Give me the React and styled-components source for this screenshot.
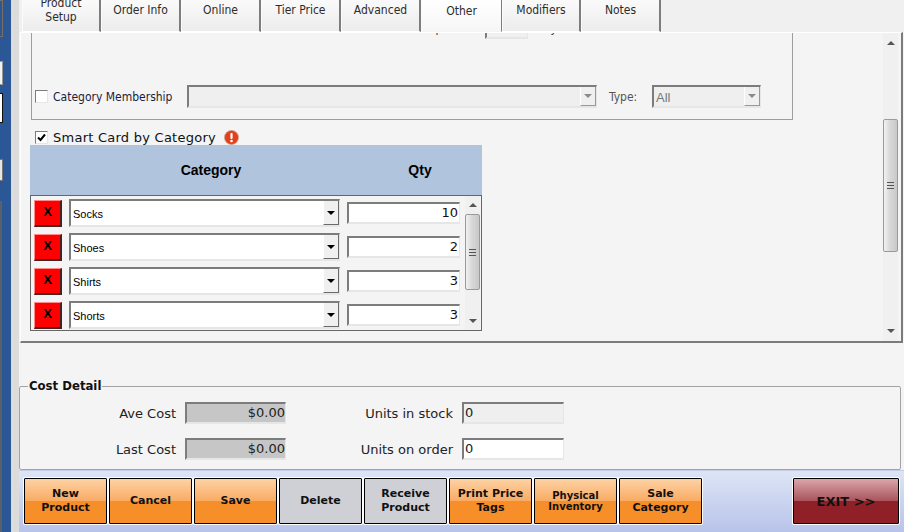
import React from 'react';
import styled, { createGlobalStyle, css } from 'styled-components';

const tabs = [
  { label: 'Product Setup', width: 79 },
  { label: 'Order Info', width: 80 },
  { label: 'Online', width: 80 },
  { label: 'Tier Price', width: 80 },
  { label: 'Advanced', width: 80 },
  { label: 'Other', width: 81, active: true },
  { label: 'Modifiers', width: 79 },
  { label: 'Notes', width: 80 },
];

const rows = [
  { name: 'Socks', qty: 10 },
  { name: 'Shoes', qty: 2 },
  { name: 'Shirts', qty: 3 },
  { name: 'Shorts', qty: 3 },
];

const actions = [
  { label: 'New\nProduct' },
  { label: 'Cancel' },
  { label: 'Save' },
  { label: 'Delete', tone: 'gray' },
  { label: 'Receive\nProduct', tone: 'gray' },
  { label: 'Print Price\nTags' },
  { label: 'Physical\nInventory', small: true },
  { label: 'Sale\nCategory' },
];

const App = () => (
  <Screen>
    <GlobalStyle />
    <Rail>
      <Stub $height={37} $fill="#2b5797" $line="#7a6f62" />
      <Stub $height={24} $top={24} $fill="#f2f2f2" $line="#999" />
      <Stub $height={30} $top={8} $fill="#fff" $line="#111" />
      <Stub $height={22} $top={36} $fill="#e6e6e6" $line="#777" />
      <RailStrip />
    </Rail>
    <Main>
      <TabBar>
        {tabs.map((tab) => (
          <Tab key={tab.label} $width={tab.width} $active={tab.active}>
            {tab.label}
          </Tab>
        ))}
      </TabBar>

      <Panel>
        <PanelContent>
          <OptionsBox>
            <ExpiryRow>
              <ExpiryLabel>Expires in</ExpiryLabel>
              <ExpiryInput />
              <ExpiryUnit>day(s)</ExpiryUnit>
            </ExpiryRow>
            <MembershipRow>
              <CheckBox />
              <OptionLabel>Category Membership</OptionLabel>
              <Combo $width={410} $disabled>
                <ComboValue />
                <DropButton $disabled>
                  <DropArrow $disabled />
                </DropButton>
              </Combo>
              <TypeLabel>Type:</TypeLabel>
              <Combo $width={109} $disabled>
                <ComboValue $disabled>All</ComboValue>
                <DropButton $disabled>
                  <DropArrow $disabled />
                </DropButton>
              </Combo>
            </MembershipRow>
          </OptionsBox>

          <SmartRow>
            <CheckBox>
              <svg width="11" height="11" viewBox="0 0 11 11">
                <path d="M2 5.5 L4.5 8 L9 2.5" fill="none" stroke="#000" strokeWidth="2" />
              </svg>
            </CheckBox>
            <SmartLabel>Smart Card by Category</SmartLabel>
            <svg width="15" height="15" viewBox="0 0 15 15">
              <circle cx="7.5" cy="7.5" r="7" fill="#e2401c" stroke="#c9a08c" strokeWidth="0.8" />
              <rect x="6.4" y="3" width="2.2" height="6" rx="1" fill="#fff" />
              <circle cx="7.5" cy="11" r="1.3" fill="#fff" />
            </svg>
          </SmartRow>

          <CategoryTable>
            <TableHead>
              <span>Category</span>
              <span>Qty</span>
            </TableHead>
            <TableBody>
              <RowList>
                {rows.map((row) => (
                  <Row key={row.name}>
                    <RemoveButton>X</RemoveButton>
                    <Combo>
                      <ComboValue>{row.name}</ComboValue>
                      <DropButton>
                        <DropArrow />
                      </DropButton>
                    </Combo>
                    <QtyInput>{row.qty}</QtyInput>
                  </Row>
                ))}
              </RowList>
              <ScrollBar $width={15} $inset={1}>
                <ScrollEnd $height={18}>
                  <ScrollArrow $up />
                </ScrollEnd>
                <Thumb $height={76}>
                  <Grip />
                </Thumb>
                <ScrollEnd $height={18} $bottom>
                  <ScrollArrow />
                </ScrollEnd>
              </ScrollBar>
            </TableBody>
          </CategoryTable>
        </PanelContent>

        <ScrollBar $width={15}>
          <ScrollEnd $height={20}>
            <ScrollArrow $up />
          </ScrollEnd>
          <ScrollGap $height={66} />
          <Thumb $height={133}>
            <Grip />
          </Thumb>
          <ScrollEnd $height={20} $bottom>
            <ScrollArrow />
          </ScrollEnd>
        </ScrollBar>
      </Panel>

      <CostBox>
        <CostLegend>Cost Detail</CostLegend>
        <CostGrid>
          <CostLabel>Ave Cost</CostLabel>
          <CostInput $tone="locked" $right>$0.00</CostInput>
          <CostLabel>Units in stock</CostLabel>
          <CostInput $tone="disabled">0</CostInput>
          <CostLabel>Last Cost</CostLabel>
          <CostInput $tone="locked" $right>$0.00</CostInput>
          <CostLabel>Units on order</CostLabel>
          <CostInput>0</CostInput>
        </CostGrid>
      </CostBox>

      <Footer>
        {actions.map((action) => (
          <ActionButton key={action.label} $tone={action.tone} $small={action.small}>
            {action.label}
          </ActionButton>
        ))}
        <ExitButton>{'EXIT >>'}</ExitButton>
      </Footer>
    </Main>
  </Screen>
);

export default App;

const GlobalStyle = createGlobalStyle`
  html, body {
    margin: 0;
    padding: 0;
    overflow: hidden;
  }
`;

const wideFont = `"DejaVu Sans", Verdana, sans-serif`;
const narrowFont = `"DejaVu Sans Condensed", "Noto Sans", Tahoma, sans-serif`;
const plainFont = `"Liberation Sans", Arial, sans-serif`;

const sunken = css`
  box-sizing: border-box;
  border-style: solid;
  border-width: 2px 1px 2px 2px;
  border-color: #7c7c7c #e6e6e6 #e6e6e6 #7c7c7c;
`;

const Screen = styled.div`
  display: flex;
  width: 904px;
  height: 532px;
  overflow: hidden;
  background: #f4f4f4;
`;

const Rail = styled.div`
  display: flex;
  flex-direction: column;
  box-sizing: border-box;
  flex: 0 0 19px;
  background: #2b5797;
  border-right: 8px solid #dcdcdc;
`;

const Stub = styled.div`
  box-sizing: border-box;
  flex: none;
  width: 3px;
  height: ${({ $height }) => $height}px;
  margin-top: ${({ $top }) => $top || 0}px;
  background: ${({ $fill }) => $fill};
  border: 1px solid ${({ $line }) => $line};
  border-left: 0;
`;

const RailStrip = styled.div`
  flex: 1;
  width: 2px;
  margin-top: 20px;
  background: #5a6068;
`;

const Main = styled.div`
  display: flex;
  flex-direction: column;
  flex: 1;
  min-width: 0;
`;

const TabBar = styled.div`
  display: flex;
  flex: 0 0 32px;
  box-sizing: border-box;
  padding-left: 3px;
  background: #f0f0f0;
`;

const Tab = styled.div`
  display: flex;
  align-items: center;
  justify-content: center;
  box-sizing: border-box;
  width: ${({ $width }) => $width}px;
  height: 32px;
  padding: 0 6px ${({ $active }) => ($active ? 10 : 12)}px;
  text-align: center;
  font: 12px/14px ${narrowFont};
  color: #2c2c2c;
  border-left: 1px solid #fbfbfb;
  border-right: 2px solid #7d7d7d;
  border-bottom: 1px solid #fff;
  background: ${({ $active }) =>
    $active ? 'linear-gradient(#fff, #f6f6f6)' : 'linear-gradient(#fafafa, #ececec)'};
  ${({ $active }) => $active && 'border-bottom-color: #f4f4f4; border-right-width: 1px;'}
`;

const Panel = styled.div`
  display: flex;
  flex: 0 0 311px;
  box-sizing: border-box;
  margin-left: 1px;
  width: 883px;
  background: #f4f4f4;
  border-top: 1px solid #fff;
  border-left: 1px solid #fff;
  border-right: 2px solid #7b7b7b;
  border-bottom: 2px solid #7b7b7b;
`;

const PanelContent = styled.div`
  flex: 1;
  min-width: 0;
  padding-left: 10px;
  overflow: hidden;
`;

const OptionsBox = styled.div`
  display: flex;
  flex-direction: column;
  box-sizing: border-box;
  width: 762px;
  height: 87px;
  border: 1px solid #9d9d9d;
  border-top: 0;
`;

const ExpiryRow = styled.div`
  display: flex;
  flex: none;
  align-items: center;
  height: 23px;
  margin-top: -17px;
  padding-left: 378px;
`;

const ExpiryLabel = styled.span`
  width: 65px;
  margin-right: 10px;
  text-align: right;
  font: 12px ${narrowFont};
  color: #333;
`;

const ExpiryInput = styled.div`
  ${sunken}
  width: 43px;
  height: 23px;
  background: #f0f0f0;
`;

const ExpiryUnit = styled.span`
  margin-left: 9px;
  font: 12px ${narrowFont};
  color: #333;
`;

const MembershipRow = styled.div`
  display: flex;
  flex: none;
  align-items: center;
  margin-top: 46px;
  padding-left: 3px;
`;

const CheckBox = styled.div`
  ${sunken}
  flex: none;
  display: flex;
  align-items: center;
  justify-content: center;
  width: 13px;
  height: 13px;
  overflow: hidden;
  background: #fff;
  border-width: 1px;
`;

const OptionLabel = styled.span`
  flex: 0 0 134px;
  margin-left: 5px;
  font: 12px ${narrowFont};
  color: #1c1c3c;
`;

const TypeLabel = styled.span`
  flex: 0 0 43px;
  margin-left: 12px;
  font: 12px ${narrowFont};
  color: #555;
`;

const Combo = styled.div`
  ${sunken}
  display: flex;
  flex: ${({ $width }) => ($width ? `0 0 ${$width}px` : '1')};
  height: ${({ $disabled }) => ($disabled ? 23 : 28)}px;
  background: ${({ $disabled }) => ($disabled ? '#efefef' : '#fff')};
`;

const ComboValue = styled.span`
  flex: 1;
  align-self: center;
  padding: 1px 0 0 2px;
  font: ${({ $disabled }) => ($disabled ? 13 : 11)}px ${plainFont};
  color: ${({ $disabled }) => ($disabled ? '#777' : '#000')};
`;

const DropButton = styled.div`
  display: flex;
  align-items: center;
  justify-content: center;
  box-sizing: border-box;
  flex: 0 0 16px;
  background: #f0f0f0;
  border-left: 1px solid #fff;
  border-right: 1px solid ${({ $disabled }) => ($disabled ? '#999' : '#6a6a6a')};
  border-bottom: 1px solid ${({ $disabled }) => ($disabled ? '#999' : '#6a6a6a')};
`;

const DropArrow = styled.span`
  width: 0;
  height: 0;
  border-left: 4px solid transparent;
  border-right: 4px solid transparent;
  border-top: 4px solid ${({ $disabled }) => ($disabled ? '#8a8a8a' : '#000')};
`;

const SmartRow = styled.div`
  display: flex;
  align-items: center;
  height: 15px;
  margin-top: 10px;
  padding-left: 4px;
`;

const SmartLabel = styled.span`
  margin: 0 8px 0 5px;
  font: 13px ${wideFont};
  letter-spacing: 0.25px;
  color: #111;
`;

const CategoryTable = styled.div`
  width: 452px;
  margin-left: -1px;
`;

const TableHead = styled.div`
  display: grid;
  grid-template-columns: 362px 56px;
  align-items: center;
  justify-items: center;
  height: 50px;
  background: #b0c4de;
  font: bold 14px ${plainFont};
  color: #000;
`;

const TableBody = styled.div`
  display: flex;
  box-sizing: border-box;
  height: 136px;
  border: 1px solid #666;
  background: #f4f4f4;
`;

const RowList = styled.div`
  display: flex;
  flex-direction: column;
  gap: 6px;
  flex: 1;
  padding: 3px 4px 0 3px;
`;

const Row = styled.div`
  display: grid;
  grid-template-columns: 28px 271px 113px;
  column-gap: 7px;
  align-items: center;
  height: 28px;
`;

const RemoveButton = styled.div`
  display: flex;
  align-items: center;
  justify-content: center;
  box-sizing: border-box;
  height: 27px;
  padding-bottom: 2px;
  background: #fe0000;
  border-style: solid;
  border-width: 1px 2px 2px 1px;
  border-color: #ff8a8a #4a2020 #4a2020 #ff8a8a;
  font: bold 13px ${plainFont};
  color: #000;
`;

const QtyInput = styled.div`
  ${sunken}
  height: 22px;
  padding-right: 1px;
  background: #fff;
  text-align: right;
  font: 13px/18px ${wideFont};
  color: #111;
`;

const ScrollBar = styled.div`
  display: flex;
  flex-direction: column;
  flex: 0 0 ${({ $width }) => $width}px;
  margin-right: ${({ $inset }) => ($inset ? 1 : 3)}px;
  background: #f0f0f0;
`;

const ScrollEnd = styled.div`
  display: flex;
  align-items: center;
  justify-content: center;
  flex: 0 0 ${({ $height }) => $height}px;
  ${({ $bottom }) => $bottom && 'margin-top: auto;'}
`;

const ScrollGap = styled.div`
  flex: 0 0 ${({ $height }) => $height}px;
`;

const ScrollArrow = styled.span`
  width: 0;
  height: 0;
  border-left: 4px solid transparent;
  border-right: 4px solid transparent;
  ${({ $up }) =>
    $up ? 'border-bottom: 4px solid #555;' : 'border-top: 4px solid #555;'}
`;

const Thumb = styled.div`
  display: flex;
  align-items: center;
  justify-content: center;
  box-sizing: border-box;
  flex: 0 0 ${({ $height }) => $height}px;
  border: 1px solid #9a9a9a;
  border-radius: 2px;
  background: linear-gradient(90deg, #f2f2f2, #d8d8d8 45%, #c8c8c8);
`;

const Grip = styled.span`
  width: 7px;
  height: 7px;
  background: repeating-linear-gradient(#555 0 1px, transparent 1px 3px);
`;

const CostBox = styled.fieldset`
  flex: 0 0 92px;
  box-sizing: border-box;
  width: 882px;
  margin: 35px 0 0;
  padding: 0;
  border: 1px solid #a3a3a3;
  border-radius: 2px;
`;

const CostLegend = styled.legend`
  margin-left: 8px;
  padding: 0 1px;
  font: bold 13px/16px ${narrowFont};
  color: #111;
`;

const CostGrid = styled.div`
  display: grid;
  grid-template-columns: 165px 101px 176px 102px;
  grid-auto-rows: 22px;
  row-gap: 14px;
  align-items: center;
  padding-top: 8px;
`;

const CostLabel = styled.span`
  padding-right: 9px;
  text-align: right;
  font: 13px ${wideFont};
  color: #222;
`;

const costFills = { locked: '#c6c6c6', disabled: '#efefef' };

const CostInput = styled.div`
  ${sunken}
  height: 22px;
  padding: 0 0 0 1px;
  background: ${({ $tone }) => costFills[$tone] || '#fff'};
  text-align: ${({ $right }) => ($right ? 'right' : 'left')};
  font: 13px/18px ${wideFont};
  color: #222;
`;

const Footer = styled.div`
  display: flex;
  flex: 1;
  gap: 2px;
  box-sizing: border-box;
  padding: 7px 5px 8px 5px;
  background: linear-gradient(#dde5f5, #b8c3ea);
  border-top: 1px solid #c3cde8;
`;

const orangeFill = 'linear-gradient(#fdd2a5, #f9ab63 50%, #f68e2a 50%, #f68e2a)';

const FooterButton = styled.button`
  flex: none;
  box-sizing: border-box;
  height: 46px;
  padding: 0;
  border: 1px solid #000;
  border-radius: 1px;
  box-shadow: 0 0 0 1px #fff;
  white-space: pre-line;
  color: #111;
  font-family: ${wideFont};
  font-weight: bold;
`;

const ActionButton = styled(FooterButton)`
  width: 83px;
  font-size: ${({ $small }) => ($small ? 10 : 11)}px;
  line-height: ${({ $small }) => ($small ? 11 : 14)}px;
  background: ${({ $tone }) => ($tone === 'gray' ? '#cfd0d6' : orangeFill)};
`;

const ExitButton = styled(FooterButton)`
  width: 106px;
  margin-left: auto;
  font-size: 13px;
  background: linear-gradient(#dba6a9, #a9535b 50%, #8f2028 50%, #8f2028);
`;
